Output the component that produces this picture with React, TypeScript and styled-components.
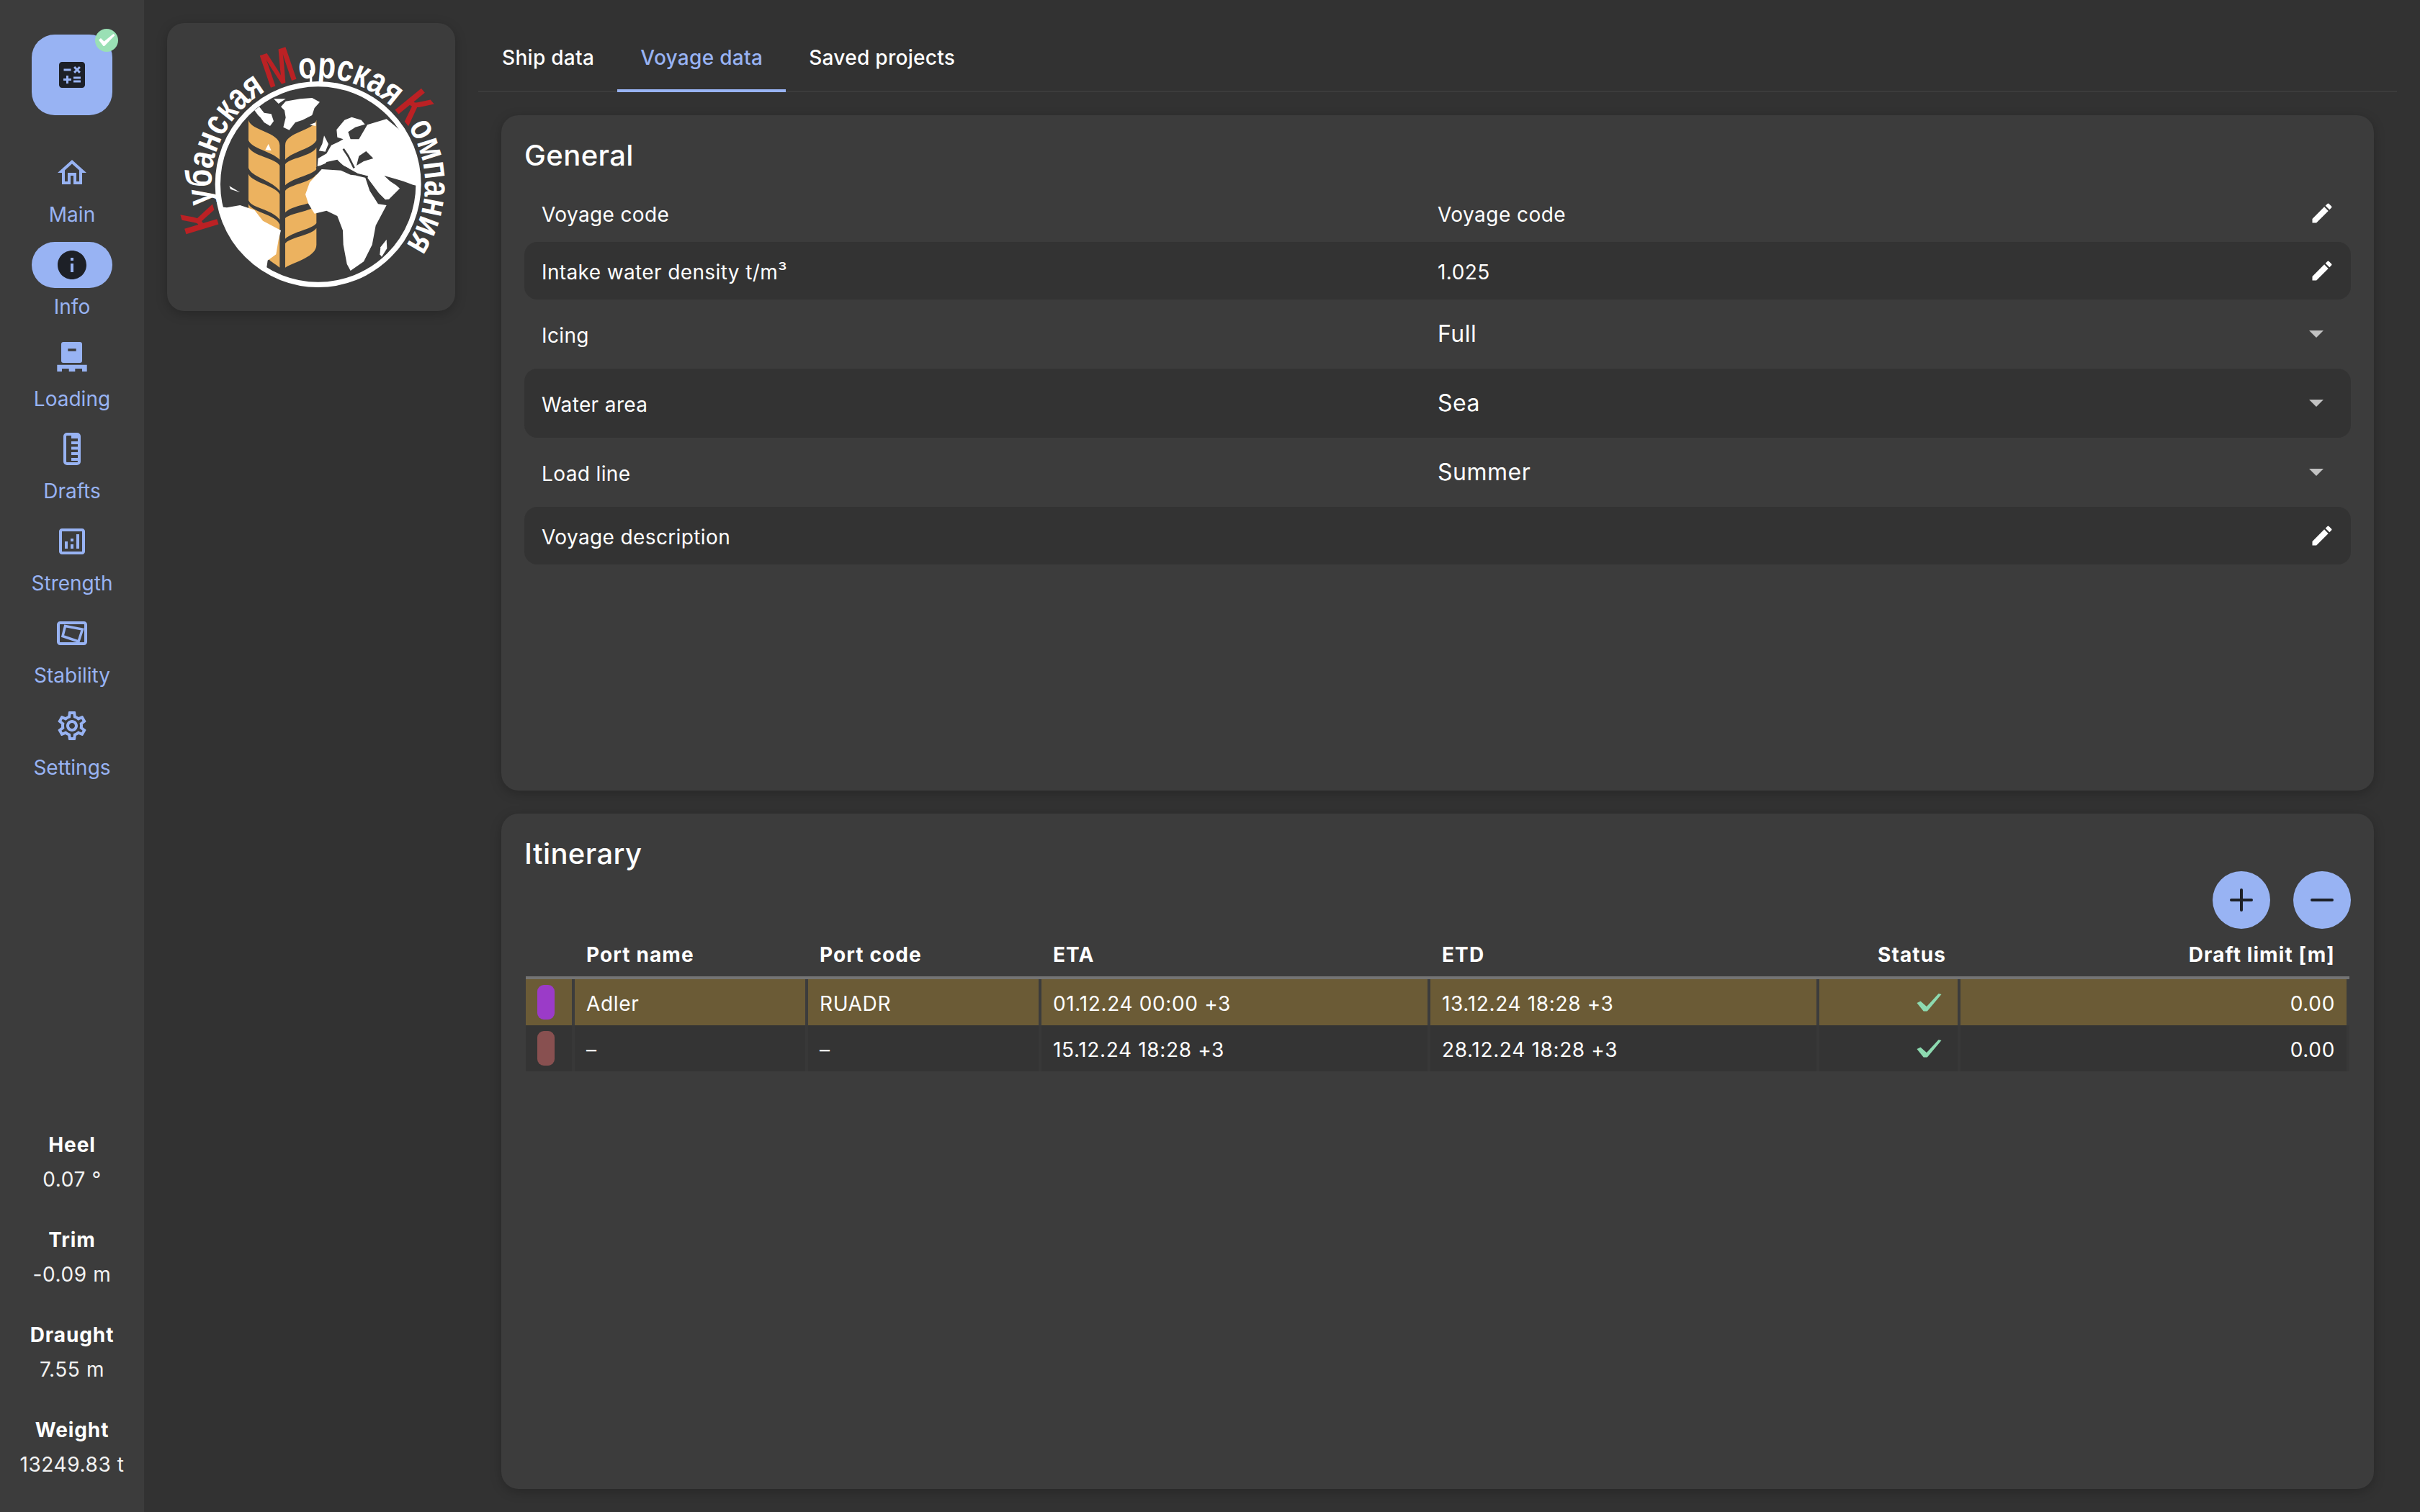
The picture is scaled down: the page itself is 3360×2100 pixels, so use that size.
import React from "react";
import styled, { createGlobalStyle } from "styled-components";
import {
  MdCalculate,
  MdOutlineHome,
  MdInfo,
  MdOutlineAnalytics,
  MdOutlineSettings,
  MdEdit,
  MdArrowDropDown,
} from "react-icons/md";
import { Plus, Minus } from "lucide-react";

const BLUE = "#98b3f3";
const DARK = "#1d2027";
const PANEL = "#3c3c3c";
const BASE = "#323232";

const Global = createGlobalStyle`
  html, body { margin: 0; padding: 0; background: ${BASE}; }
  body { font-family: Inter, "Noto Sans", sans-serif; color: #fff; }
  * { box-sizing: border-box; }
`;

const Page = styled.div`
  display: flex;
  width: 3360px;
  height: 2100px;
  overflow: hidden;
  background: ${BASE};
`;

const Sidebar = styled.aside`
  display: flex;
  flex-direction: column;
  align-items: center;
  width: 200px;
  flex: none;
  padding: 48px 0 46px;
  background: ${PANEL};
`;

const CalcButton = styled.div`
  position: relative;
  display: flex;
  align-items: center;
  justify-content: center;
  width: 112px;
  height: 112px;
  border-radius: 32px;
  background: ${BLUE};
  color: ${DARK};
`;

const Badge = styled.div`
  position: absolute;
  top: -8px;
  right: -8px;
  display: flex;
  align-items: center;
  justify-content: center;
  width: 32px;
  height: 32px;
  border-radius: 50%;
  background: #9ae0b5;
`;

const Nav = styled.nav`
  display: flex;
  flex-direction: column;
  margin-top: 48px;
`;

const NavItem = styled.div`
  display: flex;
  flex-direction: column;
  align-items: center;
  height: 128px;
`;

const NavPill = styled.div<{ $active?: boolean }>`
  display: flex;
  align-items: center;
  justify-content: center;
  width: 112px;
  height: 64px;
  border-radius: 32px;
  background: ${(p) => (p.$active ? BLUE : "transparent")};
  color: ${(p) => (p.$active ? DARK : BLUE)};
`;

const NavLabel = styled.div`
  margin-top: 6px;
  font-size: 28px;
  line-height: 40px;
  letter-spacing: 0;
  color: ${BLUE};
`;

const Stats = styled.div`
  display: flex;
  flex-direction: column;
  gap: 44px;
  margin-top: auto;
  width: 100%;
`;

const Stat = styled.div`
  display: flex;
  flex-direction: column;
  gap: 8px;
  align-items: center;
  font-size: 28px;
  line-height: 40px;
  white-space: nowrap;
`;

const StatLabel = styled.div`
  font-weight: 700;
  letter-spacing: 0.9px;
`;

const StatValue = styled.div`
  letter-spacing: 0.6px;
  color: #f2f2f2;
`;

const LogoColumn = styled.div`
  flex: none;
  width: 464px;
  padding: 32px 32px 0;
`;

const LogoCard = styled.div`
  width: 400px;
  height: 400px;
  border-radius: 24px;
  overflow: hidden;
  background: ${PANEL};
  box-shadow: 0 4px 16px rgba(0, 0, 0, 0.22);
  svg { display: block; }
`;

const Main = styled.main`
  display: flex;
  flex-direction: column;
  flex: 1;
  min-width: 0;
  padding-right: 32px;
`;

const Tabs = styled.div`
  display: flex;
  flex: none;
  height: 128px;
  padding: 32px 0 0 1px;
  border-bottom: 2px solid ${PANEL};
`;

const Tab = styled.div<{ $active?: boolean }>`
  display: flex;
  align-items: center;
  height: 96px;
  padding: 4px 32px 0;
  margin-bottom: -2px;
  font-size: 28px;
  font-weight: 500;
  letter-spacing: 0.3px;
  color: ${(p) => (p.$active ? BLUE : "#fff")};
  border-bottom: 4px solid ${(p) => (p.$active ? BLUE : "transparent")};
`;

const Content = styled.div`
  display: flex;
  flex-direction: column;
  flex: 1;
  gap: 32px;
  min-height: 0;
  padding: 32px;
`;

const Card = styled.section`
  display: flex;
  flex-direction: column;
  flex: 1 1 0;
  min-height: 0;
  padding: 32px;
  border-radius: 24px;
  background: ${PANEL};
  box-shadow: 0 4px 16px rgba(0, 0, 0, 0.22);
`;

const Heading = styled.h2`
  margin: 0;
  font-size: 40px;
  line-height: 48px;
  font-weight: 500;
  letter-spacing: 0.4px;
  color: #fff;
`;

const Rows = styled.div`
  display: flex;
  flex-direction: column;
  margin-top: 16px;
`;

const Row = styled.div<{ $tall?: boolean; $shaded?: boolean }>`
  display: grid;
  grid-template-columns: 1fr 1fr;
  align-items: center;
  height: ${(p) => (p.$tall ? 96 : 80)}px;
  padding: 0 24px;
  border-radius: 18px;
  background: ${(p) => (p.$shaded ? "#333333" : "transparent")};
`;

const RowLabel = styled.div`
  padding-top: 4px;
  font-size: 28px;
  letter-spacing: 0.38px;
`;

const RowValue = styled.div<{ $select?: boolean }>`
  display: flex;
  align-items: center;
  justify-content: space-between;
  font-size: ${(p) => (p.$select ? 32 : 28)}px;
  letter-spacing: ${(p) => (p.$select ? 0.5 : 0.45)}px;
  svg { display: block; flex: none; }
`;

const ValueText = styled.span<{ $select?: boolean }>`
  padding: ${(p) => (p.$select ? "0 0 2px" : "4px 0 0")};
`;

const DropIcon = styled(MdArrowDropDown)`
  color: #c2c2c2;
  margin-top: -2px;
`;

const EditIcon = styled(MdEdit)`
  margin-right: -2px;
`;

const ItineraryTools = styled.div`
  display: flex;
  justify-content: flex-end;
  gap: 32px;
`;

const RoundButton = styled.div`
  display: flex;
  align-items: center;
  justify-content: center;
  width: 80px;
  height: 80px;
  border-radius: 50%;
  background: ${BLUE};
  color: ${DARK};
`;

const Table = styled.div`
  margin: 0 2px;
`;

const COLUMNS = "68px 324px 324px 540px 540px 196px 540px";

const HeadRow = styled.div`
  display: grid;
  grid-template-columns: ${COLUMNS};
  align-items: center;
  height: 70px;
  padding-top: 6px;
  border-bottom: 4px solid #747474;
  font-size: 28px;
  font-weight: 700;
  letter-spacing: 1.1px;
`;

const HeadCell = styled.div<{ $right?: boolean }>`
  padding: 0 20px 0 16px;
  text-align: ${(p) => (p.$right ? "right" : "left")};
`;

const BodyRow = styled.div<{ $selected?: boolean }>`
  display: grid;
  grid-template-columns: ${COLUMNS};
  height: 64px;
  background: ${(p) => (p.$selected ? "#6b5b36" : "#343434")};
  font-size: 28px;
  letter-spacing: 0.65px;
`;

const Cell = styled.div<{ $selected?: boolean; $right?: boolean }>`
  display: flex;
  align-items: center;
  justify-content: ${(p) => (p.$right ? "flex-end" : "flex-start")};
  padding: 0 16px;
  border-right: 4px solid ${(p) => (p.$selected ? PANEL : "#383838")};
`;

const CellText = styled.span`
  padding-top: 4px;
`;

const Swatch = styled.div<{ $color: string }>`
  width: 24px;
  height: 48px;
  border-radius: 9px;
  background: ${(p) => p.$color};
`;

const StatusCheck = styled.svg`
  display: block;
  width: 35px;
  height: 26px;
  margin-right: 6px;
  color: #8ddab0;
`;

function LoadingIcon() {
  return (
    <svg width="48" height="48" viewBox="0 0 48 48" fill="currentColor">
      <path
        fillRule="evenodd"
        d="M12 3h23a3 3 0 0 1 3 3v23a3 3 0 0 1-3 3H12a3 3 0 0 1-3-3V6a3 3 0 0 1 3-3zM18.300 12.300v3.400h11.400v-3.400z"
      />
      <path d="M3.300 34.700h41.400V44H38v-4h-9.700v4h-8.600v-4H10v4H3.300z" />
    </svg>
  );
}

function DraftsIcon() {
  return (
    <svg width="48" height="48" viewBox="0 0 48 48" fill="none">
      <rect x="14" y="3" width="20" height="41" rx="3" stroke="currentColor" strokeWidth="4" />
      <g fill="currentColor">
        <rect x="23" y="5" width="10" height="4" />
        <rect x="23" y="13" width="10" height="4" />
        <rect x="23" y="20.500" width="10" height="4" />
        <rect x="23" y="28" width="10" height="4" />
        <rect x="23" y="36" width="10" height="4" />
      </g>
    </svg>
  );
}

function StabilityIcon() {
  return (
    <svg width="48" height="48" viewBox="0 0 48 48" fill="none" stroke="currentColor">
      <rect x="5" y="9" width="38" height="29" rx="2.500" strokeWidth="4" />
      <path d="M14.500 13.500 38.500 18 33 35 11 27.500z" strokeWidth="3.500" />
    </svg>
  );
}

function TickBadge() {
  return (
    <svg width="32" height="32" viewBox="0 0 32 32" fill="#fff">
      <path d="M5 15.500 8 13l4.500 4.500L25.500 7l2 2-14.500 15h-1.500z" />
    </svg>
  );
}

function Logo() {
  return (
    <svg width="400" height="400" viewBox="36 36 1200 1200">
      <defs>
        <clipPath id="globe">
          <circle cx="665" cy="708" r="412" />
        </clipPath>
        <path id="ring" d="M256 884A445 445 0 1 1 1031 962" />
      </defs>
      <g fill="#ecb25f">
        <path d="M375 440C385 485 505 490 505 545L505 605C470 570 390 560 375 525Z" />
        <path d="M375 552C390 590 490 600 505 630L505 735C470 690 390 680 375 640Z" />
        <path d="M375 665C390 700 490 715 505 750L505 855C470 810 390 810 375 775Z" />
        <path d="M375 790C390 825 490 835 505 875L505 1055C490 1040 455 1025 455 1010L375 900Z" />
        <path d="M658 440C648 485 528 490 528 545L528 605C560 570 640 560 658 525Z" />
        <path d="M658 555C640 590 540 600 528 625L528 712C560 680 640 670 658 645Z" />
        <path d="M658 665C640 700 540 710 528 735L528 825C560 795 640 790 658 775Z" />
        <path d="M658 795C640 820 540 830 528 850L528 935C560 905 640 895 658 870Z" />
        <path d="M658 890C640 920 540 930 528 955L528 1055C570 1030 658 1010 658 960Z" />
      </g>
      <g fill="#fff" clipPath="url(#globe)">
        <path d="M510 385L530 362 590 352 640 348 672 365 650 390 640 420 600 440 570 450 545 482 520 470 530 430 525 400Z" />
        <path d="M400 400L420 385 440 410 470 415 480 445 465 465 440 450 425 430 415 420Z" />
        <path d="M480 352L530 352 500 372Z" />
        <path d="M445 565L470 567 458 540Z" />
        <path d="M630 460L655 450 655 465Z" />
        <path d="M295 715L340 742 300 728Z" />
        <path d="M690 505L708 540 695 572 668 568 682 540Z" />
        <path d="M662 632L665 600 700 580 720 545 752 530 770 520 745 512 742 480 775 440 805 428 845 440 860 458 820 470 790 490 800 520 835 520 870 460 950 436 1100 560 1100 720 1060 710 1020 695 985 685 940 672 965 695 990 712 1005 725 960 770 945 772 918 745 870 680 860 672 835 665 810 660 790 640 760 625 745 605 700 615 690 630Z" />
        <path d="M612 750L630 700 680 645 760 650 800 668 860 675 880 735 915 790 950 795 905 880 890 960 855 1030 800 1068 785 1040 770 960 768 900 745 840 700 818 650 830 625 790Z" />
        <path d="M950 938L952 975 930 1010 922 1000 925 970Z" />
        <path d="M240 800L285 805 340 795 400 815 435 860 510 900 500 940 490 1000 455 1025 450 1060 400 1140 150 950Z" />
      </g>
      <path d="M835 590L865 570 895 600 855 612 825 630Z" fill={PANEL} />
      <path d="M658 642L700 624 745 614 770 636 800 652 830 668 872 678" fill="none" stroke={PANEL} strokeWidth="10" />
      <path d="M770 560L790 590 815 640" fill="none" stroke={PANEL} strokeWidth="8" />
      <circle cx="665" cy="708" r="418" fill="none" stroke="#fff" strokeWidth="22" />
      <rect x="630" y="232" width="10" height="60" fill="#fff" />
      <text
        fontFamily="'Liberation Sans Narrow', 'Liberation Sans', sans-serif"
        fontSize="155"
        fontWeight="700"
        fill="#fff"
      >
        <textPath href="#ring" textLength="1848" lengthAdjust="spacingAndGlyphs">
          <tspan fontSize="205" fill="#bb2124">К</tspan>убанская<tspan fontSize="60"> </tspan><tspan fontSize="205" fill="#bb2124">М</tspan>орская<tspan fontSize="30"> </tspan><tspan fontSize="205" fill="#bb2124">К</tspan>омпания
        </textPath>
      </text>
    </svg>
  );
}

const navItems: { label: string; icon: React.ReactNode; active?: boolean }[] = [
  { label: "Main", icon: <MdOutlineHome size={48} /> },
  { label: "Info", icon: <MdInfo size={48} />, active: true },
  { label: "Loading", icon: <LoadingIcon /> },
  { label: "Drafts", icon: <DraftsIcon /> },
  { label: "Strength", icon: <MdOutlineAnalytics size={48} /> },
  { label: "Stability", icon: <StabilityIcon /> },
  { label: "Settings", icon: <MdOutlineSettings size={48} /> },
];

const stats = [
  ["Heel", "0.07 °"],
  ["Trim", "-0.09 m"],
  ["Draught", "7.55 m"],
  ["Weight", "13249.83 t"],
];

const generalRows: { label: string; value: string; select?: boolean; shaded?: boolean }[] = [
  { label: "Voyage code", value: "Voyage code" },
  { label: "Intake water density t/m³", value: "1.025", shaded: true },
  { label: "Icing", value: "Full", select: true },
  { label: "Water area", value: "Sea", select: true, shaded: true },
  { label: "Load line", value: "Summer", select: true },
  { label: "Voyage description", value: "", shaded: true },
];

const ports = [
  { color: "#9b3bc8", name: "Adler", code: "RUADR", eta: "01.12.24 00:00 +3", etd: "13.12.24 18:28 +3", selected: true },
  { color: "#885050", name: "–", code: "–", eta: "15.12.24 18:28 +3", etd: "28.12.24 18:28 +3", selected: false },
];

export default function App() {
  return (
    <Page>
      <Global />
      <Sidebar>
        <CalcButton>
          <MdCalculate size={48} />
          <Badge>
            <TickBadge />
          </Badge>
        </CalcButton>
        <Nav>
          {navItems.map((item) => (
            <NavItem key={item.label}>
              <NavPill $active={item.active}>{item.icon}</NavPill>
              <NavLabel>{item.label}</NavLabel>
            </NavItem>
          ))}
        </Nav>
        <Stats>
          {stats.map(([label, value]) => (
            <Stat key={label}>
              <StatLabel>{label}</StatLabel>
              <StatValue>{value}</StatValue>
            </Stat>
          ))}
        </Stats>
      </Sidebar>
      <LogoColumn>
        <LogoCard>
          <Logo />
        </LogoCard>
      </LogoColumn>
      <Main>
        <Tabs>
          <Tab>Ship data</Tab>
          <Tab $active>Voyage data</Tab>
          <Tab>Saved projects</Tab>
        </Tabs>
        <Content>
          <Card>
            <Heading>General</Heading>
            <Rows>
              {generalRows.map((row) => (
                <Row key={row.label} $tall={row.select} $shaded={row.shaded}>
                  <RowLabel>{row.label}</RowLabel>
                  <RowValue $select={row.select}>
                    <ValueText $select={row.select}>{row.value}</ValueText>
                    {row.select ? <DropIcon size={48} /> : <EditIcon size={36} />}
                  </RowValue>
                </Row>
              ))}
            </Rows>
          </Card>
          <Card>
            <Heading>Itinerary</Heading>
            <ItineraryTools>
              <RoundButton>
                <Plus size={48} strokeWidth={2} />
              </RoundButton>
              <RoundButton>
                <Minus size={48} strokeWidth={2} />
              </RoundButton>
            </ItineraryTools>
            <Table>
              <HeadRow>
                <HeadCell />
                <HeadCell>Port name</HeadCell>
                <HeadCell>Port code</HeadCell>
                <HeadCell>ETA</HeadCell>
                <HeadCell>ETD</HeadCell>
                <HeadCell $right>Status</HeadCell>
                <HeadCell $right>Draft limit [m]</HeadCell>
              </HeadRow>
              {ports.map((port) => (
                <BodyRow key={port.etd} $selected={port.selected}>
                  <Cell $selected={port.selected}>
                    <Swatch $color={port.color} />
                  </Cell>
                  <Cell $selected={port.selected}><CellText>{port.name}</CellText></Cell>
                  <Cell $selected={port.selected}><CellText>{port.code}</CellText></Cell>
                  <Cell $selected={port.selected}><CellText>{port.eta}</CellText></Cell>
                  <Cell $selected={port.selected}><CellText>{port.etd}</CellText></Cell>
                  <Cell $selected={port.selected} $right>
                    <StatusCheck viewBox="0 0 35 26">
                      <path
                        d="M0.500 14 5.500 11.500 14 19 30.600 1 34.500 2 14.800 25.500H9.700Z"
                        fill="currentColor"
                      />
                    </StatusCheck>
                  </Cell>
                  <Cell $selected={port.selected} $right><CellText>0.00</CellText></Cell>
                </BodyRow>
              ))}
            </Table>
          </Card>
        </Content>
      </Main>
    </Page>
  );
}
